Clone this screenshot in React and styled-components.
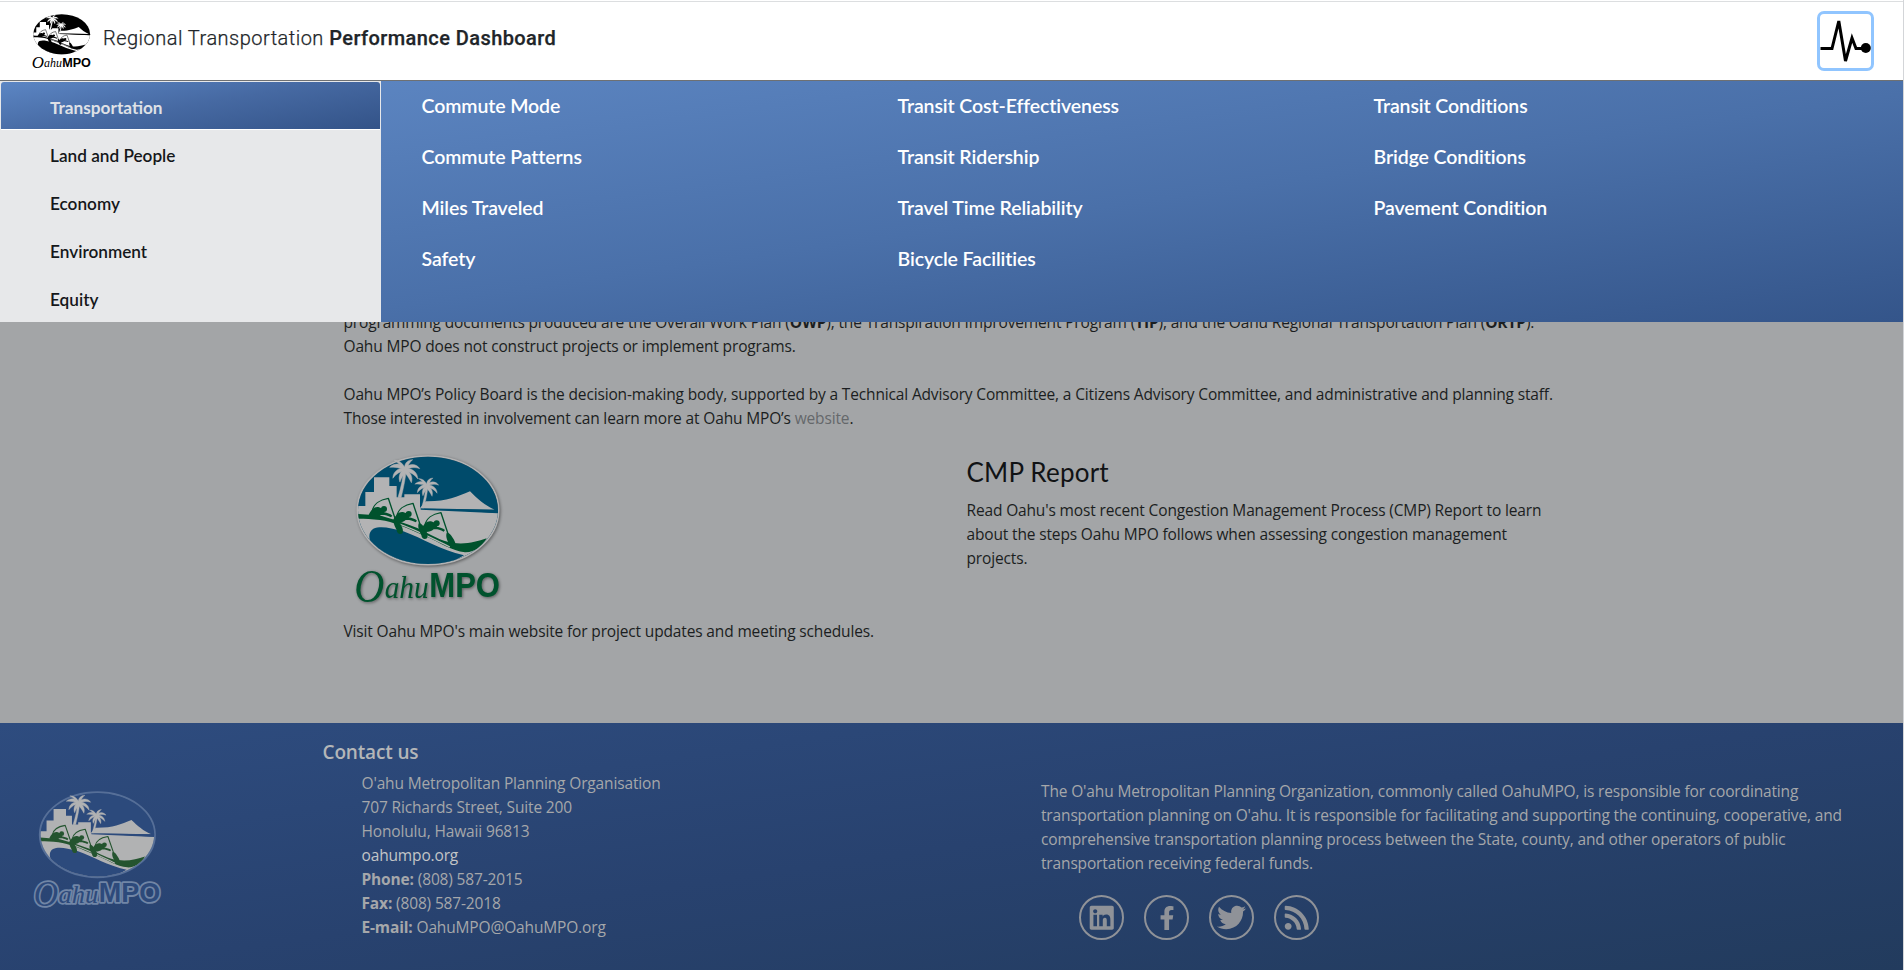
import React from "react";
import styled, { createGlobalStyle, css } from "styled-components";
import { FaLinkedin, FaFacebookF, FaTwitter, FaRss } from "react-icons/fa";

const GlobalStyle = createGlobalStyle`
  *, *::before, *::after { box-sizing: border-box; }
  html, body { margin: 0; padding: 0; }
  body { overflow: hidden; background: #a3a5a7; }
  p, h2, h3, ul { margin: 0; padding: 0; }
  ul { list-style: none; }
  a { color: inherit; text-decoration: none; }
`;

const bodyText = css`
  font-family: "Open Sans", "Noto Sans", sans-serif;
  font-size: 15.5px;
  line-height: 24px;
  letter-spacing: -0.15px;
  white-space: nowrap;
`;

const menuText = css`
  font-family: Lato, "Open Sans", sans-serif;
  font-weight: 600;
  white-space: nowrap;
`;

const Page = styled.div`
  height: 970px;
  overflow: hidden;
  display: flex;
  flex-direction: column;
  border-right: 1px solid #d3d5d8;
  ${bodyText}
`;

/* ---------- header ---------- */

const Header = styled.header`
  flex: none;
  height: 81px;
  display: flex;
  align-items: flex-start;
  background: #fff;
  border-top: 1px solid #fff;
  border-bottom: 1px solid #6e7072;
  box-shadow: inset 0 1px 0 #dcdee0;
`;

const HeaderLogo = styled.a`
  display: block;
  width: 73px;
  height: 67px;
  margin: 7px 0 0 26px;
`;

const SiteTitle = styled.div`
  margin: 24px 0 0 4px;
  font-family: Roboto, sans-serif;
  font-size: 20px;
  line-height: 26px;
  font-weight: 300;
  letter-spacing: 0.48px;
  color: #212529;
  -webkit-text-stroke: 0.25px #212529;

  strong {
    font-weight: 500;
    letter-spacing: 0.42px;
  }
`;

const PulseButton = styled.button`
  width: 57px;
  height: 60px;
  margin: 10px 29px 0 auto;
  padding: 0;
  border: 3px solid #90c5ff;
  border-radius: 7px;
  background: #fff;
  display: flex;
`;

/* ---------- mega menu ---------- */

const MegaMenu = styled.nav`
  flex: none;
  position: relative;
  z-index: 1;
  height: 241px;
  display: flex;
`;

const Categories = styled.ul`
  width: 381px;
  padding-top: 1px;
  background: #e7e8ea;
  overflow: hidden;
`;

const Category = styled.li`
  ${menuText}
  height: 48px;
  padding-left: ${(p) => (p.$active ? 49 : 50)}px;
  font-size: 17.2px;
  line-height: 51px;
  letter-spacing: 0;
  color: #15171a;

  ${(p) =>
    p.$active &&
    css`
      margin: 0 1px;
      border-bottom: 1px solid #fff;
      border-radius: 3px 3px 0 0;
      font-weight: 700;
      color: #dfe1e6;
      background: linear-gradient(170deg, #5c86c4, #4669a2 50%, #335388);
    `}
`;

const Links = styled.div`
  flex: 1;
  display: grid;
  grid-template-columns: repeat(3, 476px);
  padding-left: 40.5px;
  background: linear-gradient(172deg, #5b84c0, #4a70a9 50%, #34558a);
`;

const LinkColumn = styled.ul`
  ${menuText}
  margin-top: -1px;
  font-size: 19.5px;
  line-height: 51px;
  letter-spacing: -0.1px;
  color: #fff;
`;

/* ---------- content ---------- */

const Main = styled.main`
  flex: none;
  height: 401px;
  padding-left: 343.5px;
  color: #1b1e21;
  background: #a3a5a7;
`;

const Intro = styled.div`
  display: flex;
  flex-direction: column;
  gap: 24px;
  margin-top: -12px;

  a {
    color: #65686b;
  }
`;

const Columns = styled.div`
  display: grid;
  grid-template-columns: 623px 1fr;
`;

const ContentLogo = styled.div`
  width: 180px;
  height: 180px;
  margin: 10px 0 -1px -3.5px;
  filter: drop-shadow(1px 1.5px 1.5px rgba(0, 0, 0, 0.45));
`;

const ReportTitle = styled.h2`
  margin: 26px 0 10px;
  font-family: Lato, "Open Sans", sans-serif;
  font-size: 26px;
  line-height: 32px;
  font-weight: 400;
  letter-spacing: 0.2px;
  color: #111315;
`;

/* ---------- footer ---------- */

const Footer = styled.footer`
  flex: none;
  height: 248px;
  display: flex;
  align-items: flex-start;
  color: #a5a7aa;
  background: linear-gradient(172deg, #2e4c7f, #28426f 50%, #223b5d);
`;

const FooterLogo = styled.div`
  width: 146px;
  height: 140px;
  margin: 57px 0 0 25.5px;
`;

const Contact = styled.section`
  width: 717.5px;
  padding: 17px 0 0 151px;
`;

const ContactTitle = styled.h3`
  margin-bottom: 7px;
  font-size: 19px;
  line-height: 24px;
  font-weight: 600;
  color: #b4b6b8;
`;

const Address = styled.div`
  padding-left: 39px;

  a {
    color: #c3c5c7;
  }
  strong {
    font-weight: 700;
  }
`;

const About = styled.section`
  padding: 56px 0 0 152px;
`;

const Socials = styled.div`
  display: flex;
  gap: 20px;
  padding: 20px 0 0 38px;
`;

const Social = styled.a`
  width: 45px;
  height: 45px;
  display: grid;
  place-items: center;
  border: 2px solid #8f9298;
  border-radius: 50%;
  color: #8f9298;
`;

/* ---------- drawings ---------- */

const Svg = styled.svg`
  display: block;
  width: 100%;
  height: 100%;
  overflow: visible;
`;

function Palm({ x, y, s, color }) {
  return (
    <g transform={`translate(${x} ${y}) scale(${s})`} fill={color} stroke={color} strokeWidth="1.5">
      <path d="M-4 4 C-6 30 -12 60 -22 92 L-12 92 C-4 60 2 30 4 4Z" />
      <path d="M0 0 C-14 -16 -34 -16 -48 -2 C-32 -4 -14 0 0 6Z" />
      <path d="M0 0 C-18 -2 -38 10 -38 32 C-28 18 -14 10 2 8Z" />
      <path d="M0 2 C-16 10 -22 26 -16 44 C-10 28 -2 18 6 8Z" />
      <path d="M0 0 C-8 -16 -18 -24 -34 -24 C-22 -16 -12 -6 -2 6Z" />
      <path d="M-2 2 C-2 -14 8 -26 24 -26 C14 -18 8 -8 6 6Z" />
      <path d="M0 0 C14 -16 36 -14 46 2 C30 -4 14 -2 0 8Z" />
      <path d="M0 0 C20 0 40 12 40 34 C30 20 16 12 0 10Z" />
      <path d="M0 2 C16 12 26 26 20 46 C12 30 4 20 -4 10Z" />
    </g>
  );
}

function Paddler({ x, y, color }) {
  return (
    <g transform={`translate(${x} ${y})`} fill={color}>
      <path d="M-57 50 C-50 34 -40 24 -28 26 L-12 32 L-10 42 C-2 44 8 46 14 52 L10 57 C-2 50 -12 49 -20 50 C-26 56 -34 58 -42 58 Z" />
      <circle cx="-11" cy="32" r="9" />
      <path d="M19 60 C26 60 32 66 36 74 C43 83 49 97 44 105 C36 110 28 105 27 95 C22 85 15 74 19 60Z" />
      <path
        d="M-46 38 C-43 18 -24 4 2 0 L24 66"
        fill="none"
        stroke={color}
        strokeWidth="4"
        strokeLinejoin="round"
      />
    </g>
  );
}

function MpoLogo({ id, sea, green, land, rim, rimWidth, lettering, halo, textX = 0, textW = 0 }) {
  return (
    <Svg viewBox="0 0 540 540" preserveAspectRatio="none">
      <clipPath id={id}>
        <ellipse cx="264" cy="211" rx="210" ry="161" />
      </clipPath>
      {rim && (
        <ellipse cx="264" cy="211" rx="212" ry="163" fill="none" stroke={rim} strokeWidth={rimWidth} />
      )}
      <g clipPath={`url(#${id})`}>
        <rect x="40" y="40" width="450" height="345" fill={sea} />
        <path
          d="M40 198 H76 V156 H102 V112 H148 V138 H170 V172 H193 V163 H240 V205 L480 219 V385 H40Z"
          fill={land}
        />
        <path d="M240 204 L258 184 C320 185 350 170 390 154 C412 176 435 197 464 209 L240 206Z" fill={land} />
        <path d="M242 205 L464 209 L480 206 V220 L242 209Z" fill={sea} />
        <path
          d="M100 320 C84 298 84 276 100 266 C120 257 150 262 190 274 C250 296 300 330 372 346 C330 372 290 385 240 385 C170 385 120 360 100 320Z"
          fill={sea}
        />
        <path
          d="M52 222 C85 226 110 223 135 231 C170 240 200 252 232 264 C275 286 300 302 340 309 C380 314 410 305 440 295 C428 318 405 338 375 337 C335 332 300 308 262 291 C200 264 160 245 120 240 C95 237 75 236 52 236Z"
          fill={green}
        />
        <path d="M172 250 C230 269 280 298 330 321" fill="none" stroke={land} strokeWidth="4" />
      </g>
      <Palm x={195} y={84} s={0.96} color={land} />
      <Palm x={261} y={134} s={0.76} color={land} />
      <Paddler x={143} y={175} color={green} />
      <Paddler x={217} y={190} color={green} />
      <Paddler x={301} y={218} color={green} />
      <g
        fill={lettering}
        stroke={halo || "none"}
        strokeWidth={halo ? 14 : 0}
        strokeLinejoin="round"
        paintOrder="stroke"
      >
        <g fontFamily='"Liberation Serif", serif' fontStyle="italic">
          <text x={43 + textX} y="486" fontSize="142" textLength={90} lengthAdjust="spacingAndGlyphs">
            O
          </text>
          <text x={134 + textX} y="473" fontSize="96" textLength={132 + textW} lengthAdjust="spacingAndGlyphs">
            ahu
          </text>
        </g>
        <text
          x={268 + textX + textW}
          y="472"
          fontFamily='"Liberation Sans", sans-serif'
          fontWeight="700"
          fontSize="104"
          textLength={212 + textW}
          lengthAdjust="spacingAndGlyphs"
        >
          MPO
        </text>
      </g>
    </Svg>
  );
}

function Pulse() {
  return (
    <Svg viewBox="0 0 51 54">
      <path d="M0.5 34.5 H12 L18.8 7 L25.5 47 L32 24 L36 34.5 H45" fill="none" stroke="#000" strokeWidth="3" />
      <circle cx="45.8" cy="34" r="5" />
    </Svg>
  );
}

/* ---------- data ---------- */

const categories = ["Transportation", "Land and People", "Economy", "Environment", "Equity"];

const links = [
  ["Commute Mode", "Commute Patterns", "Miles Traveled", "Safety"],
  ["Transit Cost-Effectiveness", "Transit Ridership", "Travel Time Reliability", "Bicycle Facilities"],
  ["Transit Conditions", "Bridge Conditions", "Pavement Condition"],
];

const socials = [
  { name: "LinkedIn", Icon: FaLinkedin, size: 27.5 },
  { name: "Facebook", Icon: FaFacebookF, size: 24 },
  { name: "Twitter", Icon: FaTwitter, size: 29 },
  { name: "RSS", Icon: FaRss, size: 27.5 },
];

export default function App() {
  return (
    <Page>
      <GlobalStyle />
      <Header>
        <HeaderLogo href="#">
          <MpoLogo id="mark-header" sea="#000" green="#000" land="#fff" lettering="#000" />
        </HeaderLogo>
        <SiteTitle>
          Regional Transportation <strong>Performance Dashboard</strong>
        </SiteTitle>
        <PulseButton aria-label="Menu">
          <Pulse />
        </PulseButton>
      </Header>

      <MegaMenu>
        <Categories>
          {categories.map((name, i) => (
            <Category key={name} $active={i === 0}>
              {name}
            </Category>
          ))}
        </Categories>
        <Links>
          {links.map((column) => (
            <LinkColumn key={column[0]}>
              {column.map((name) => (
                <li key={name}>
                  <a href="#">{name}</a>
                </li>
              ))}
            </LinkColumn>
          ))}
        </Links>
      </MegaMenu>

      <Main>
        <Intro>
          <p>
            programming documents produced are the Overall Work Plan (<b>OWP</b>), the Transpiration Improvement Program
            (<b>TIP</b>), and the Oahu Regional Transportation Plan (<b>ORTP</b>).
            <br />
            Oahu MPO does not construct projects or implement programs.
          </p>
          <p>
            Oahu MPO’s Policy Board is the decision-making body, supported by a Technical Advisory Committee, a Citizens
            Advisory Committee, and administrative and planning staff.
            <br />
            Those interested in involvement can learn more at Oahu MPO’s <a href="#">website</a>.
          </p>
        </Intro>
        <Columns>
          <div>
            <ContentLogo>
              <MpoLogo
                id="mark-content"
                sea="#004b6b"
                green="#00522d"
                land="#b3b3b4"
                rim="#b3b3b4"
                rimWidth={5}
                lettering="#00522d"
              />
            </ContentLogo>
            <p>Visit Oahu MPO's main website for project updates and meeting schedules.</p>
          </div>
          <div>
            <ReportTitle>CMP Report</ReportTitle>
            <p>
              Read Oahu's most recent Congestion Management Process (CMP) Report to learn
              <br />
              about the steps Oahu MPO follows when assessing congestion management
              <br />
              projects.
            </p>
          </div>
        </Columns>
      </Main>

      <Footer>
        <FooterLogo>
          <MpoLogo
            id="mark-footer"
            sea="#2c4a7c"
            green="#24542f"
            land="#b1b2b3"
            rim="#566f98"
            rimWidth={9}
            lettering="#2d4a7b"
            halo="#7186a6"
            textX={-14}
            textW={15}
          />
        </FooterLogo>
        <Contact>
          <ContactTitle>Contact us</ContactTitle>
          <Address>
            <p>O'ahu Metropolitan Planning Organisation</p>
            <p>707 Richards Street, Suite 200</p>
            <p>Honolulu, Hawaii 96813</p>
            <p>
              <a href="#">oahumpo.org</a>
            </p>
            <p>
              <strong>Phone:</strong> (808) 587-2015
            </p>
            <p>
              <strong>Fax:</strong> (808) 587-2018
            </p>
            <p>
              <strong>E-mail:</strong> OahuMPO@OahuMPO.org
            </p>
          </Address>
        </Contact>
        <About>
          <p>
            The O'ahu Metropolitan Planning Organization, commonly called OahuMPO, is responsible for coordinating
            <br />
            transportation planning on O'ahu. It is responsible for facilitating and supporting the continuing,
            cooperative, and
            <br />
            comprehensive transportation planning process between the State, county, and other operators of public
            <br />
            transportation receiving federal funds.
          </p>
          <Socials>
            {socials.map(({ name, Icon, size }) => (
              <Social key={name} href="#" aria-label={name}>
                <Icon size={size} />
              </Social>
            ))}
          </Socials>
        </About>
      </Footer>
    </Page>
  );
}
